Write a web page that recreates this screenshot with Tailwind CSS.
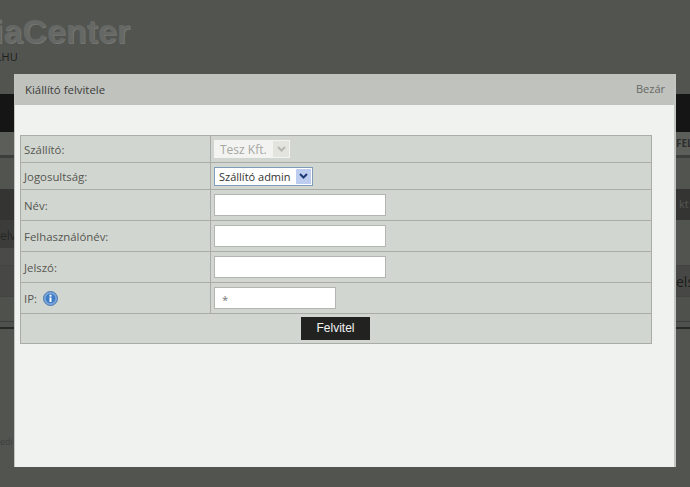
<!DOCTYPE html>
<html lang="hu">
<head>
<meta charset="utf-8">
<script src="https://cdn.jsdelivr.net/npm/@tailwindcss/browser@4"></script>
</head>
<body class="m-0 overflow-hidden">
<div class="relative w-[690px] h-[487px] overflow-hidden bg-[#525450] font-['Open_Sans',sans-serif]">
  <!-- dimmed page behind the dialog -->
  <div class="flex flex-col h-full">
    <header class="h-[94px] shrink-0 relative overflow-hidden">
      <div class="absolute left-[-74px] top-[10px] text-[34px] leading-[42px] font-bold text-[#666865] [text-shadow:1px_1px_0_#747672] font-['Liberation_Sans',sans-serif] whitespace-nowrap">MediaCenter</div>
      <div class="absolute left-[-14px] top-[50px] text-[11px] leading-[14px] text-[#1c1d1b] whitespace-nowrap">AL.HU</div>
    </header>
    <div class="h-[38px] shrink-0 bg-[#141514]"></div>
    <div class="h-[23px] shrink-0 bg-[#5c5e5a] flex justify-end items-center"><span class="text-[10px] font-bold text-[#2d2e2c] w-[14px] overflow-hidden whitespace-nowrap">FELH</span></div>
    <div class="h-[3px] shrink-0 bg-[#3d3e3c]"></div>
    <div class="h-[31px] shrink-0 bg-[#525450]"></div>
    <div class="h-[31px] shrink-0 bg-[#343533] flex justify-end items-center text-[11px] text-[#555654]"><span class="w-[11px] overflow-hidden whitespace-nowrap">kt</span></div>
    <div class="h-[28px] shrink-0 flex items-center justify-start text-[12px] text-[#252624]"><span class="w-[14px] h-full leading-[32px] bg-[#3c3d3b] overflow-hidden whitespace-nowrap">elv</span></div>
    <div class="h-[17px] shrink-0 flex"><span class="w-[14px] bg-[#4a4b48]"></span></div>
    <div class="h-[31px] shrink-0 bg-[#474845] border-t border-[#434441] flex justify-end items-center"><span class="text-[14px] text-[#1c1d1b] w-[14px] overflow-hidden whitespace-nowrap">els</span></div>
    <div class="h-[26px] shrink-0 bg-[#4f514d] border-t border-[#434441] border-b border-b-[#3d3e3c]"></div>
    <div class="h-[5px] shrink-0 bg-[#4f514d]"></div>
    <div class="h-[2px] shrink-0 bg-[#282927]"></div>
    <div class="flex-1 pt-[106px] text-[9px] text-[#3d3e3c]"><span class="block w-[14px] overflow-hidden whitespace-nowrap">edi</span></div>
  </div>

  <!-- dialog -->
  <div class="absolute left-[14px] top-[74px] w-[662px] h-[393px] flex flex-col bg-[#f0f2ef] border-l border-r-2 border-[#c3c5c1]">
    <div class="h-[31px] shrink-0 bg-[#c0c2be] flex justify-between pl-[10px] pr-[9px] text-[#3c3d3a]">
      <span class="text-[11.4px] leading-[32px]">Kiállító felvitele</span>
      <span class="text-[11px] leading-[29px] text-[#666864]">Bezár</span>
    </div>
    <div class="pt-[30px] pl-[5px]">
      <div class="w-[632px] grid grid-cols-[190px_1fr] bg-[#d2d6d0] border border-[#a9aca7] text-[11.4px] leading-[16px] text-[#555652]">
        <div class="h-[26px] flex items-center pt-[2px] pl-[3px] border-r border-[#a9aca7]">Szállító:</div>
        <div class="h-[26px] flex items-center pl-[3px]">
          <div class="w-[76px] h-[18px] flex items-center justify-between bg-[#f3f4f1] pl-[6px] pr-[1px] text-[12px] text-[#a5a7a3] whitespace-nowrap">
            <span class="pt-[2px]">Tesz Kft.</span>
            <span class="w-[16px] h-[16px] bg-[#e3e4de] flex items-center justify-center"><svg width="9" height="6" viewBox="0 0 9 6"><path d="M1 1l3.5 3.5L8 1" fill="none" stroke="#b5b7b0" stroke-width="2"/></svg></span>
          </div>
        </div>
        <div class="h-[27px] flex items-center pt-[2px] pl-[3px] border-t border-r border-[#a9aca7]">Jogosultság:</div>
        <div class="h-[27px] flex items-center pl-[3px] border-t border-[#a9aca7]">
          <div class="w-[99px] h-[19px] flex items-center justify-between bg-white border border-[#7f9db9] pl-[4px] pr-[1px] text-[11px] text-[#333431] whitespace-nowrap">
            <span class="pt-[1px]">Szállító admin</span>
            <span class="w-[15px] h-[15px] bg-[#bccdf0] flex items-center justify-center"><svg width="9" height="6" viewBox="0 0 9 6"><path d="M1 1l3.5 3.5L8 1" fill="none" stroke="#1f3a78" stroke-width="2"/></svg></span>
          </div>
        </div>
        <div class="h-[31px] flex items-center pt-[1px] pl-[3px] border-t border-r border-[#a9aca7]">Név:</div>
        <div class="h-[31px] flex items-center pl-[3px] border-t border-[#a9aca7]"><div class="w-[172px] h-[22px] bg-white border border-[#b3b5b0]"></div></div>
        <div class="h-[31px] flex items-center pt-[1px] pl-[3px] border-t border-r border-[#a9aca7]">Felhasználónév:</div>
        <div class="h-[31px] flex items-center pl-[3px] border-t border-[#a9aca7]"><div class="w-[172px] h-[22px] bg-white border border-[#b3b5b0]"></div></div>
        <div class="h-[31px] flex items-center pt-[1px] pl-[3px] border-t border-r border-[#a9aca7]">Jelszó:</div>
        <div class="h-[31px] flex items-center pl-[3px] border-t border-[#a9aca7]"><div class="w-[172px] h-[22px] bg-white border border-[#b3b5b0]"></div></div>
        <div class="h-[31px] flex items-center gap-[6px] pt-[1px] pl-[3px] border-t border-r border-[#a9aca7]">
          <span>IP:</span>
          <svg width="15" height="15" viewBox="0 0 15 15"><circle cx="7.5" cy="7.5" r="7" fill="#7ca6da" stroke="#4a78b0"/><circle cx="7.5" cy="7.5" r="4.8" fill="#3f7cc6"/><rect x="6.5" y="6.5" width="2" height="4.5" fill="#fff"/><rect x="6.5" y="3.7" width="2" height="2" fill="#fff"/></svg>
        </div>
        <div class="h-[31px] flex items-center pl-[3px] border-t border-[#a9aca7]"><div class="w-[122px] h-[22px] bg-white border border-[#b3b5b0] pl-[7px] pt-[2px] leading-[20px] text-[#777]">*</div></div>
        <div class="col-span-2 h-[30px] flex items-center justify-center pr-[2px] border-t border-[#a9aca7]">
          <div class="w-[69px] h-[23px] bg-[#222321] text-[#f4f4f4] text-[12px] leading-[23px] text-center pl-[1px] font-['Liberation_Sans',sans-serif]">Felvitel</div>
        </div>
      </div>
    </div>
  </div>
</div>
</body>
</html>
